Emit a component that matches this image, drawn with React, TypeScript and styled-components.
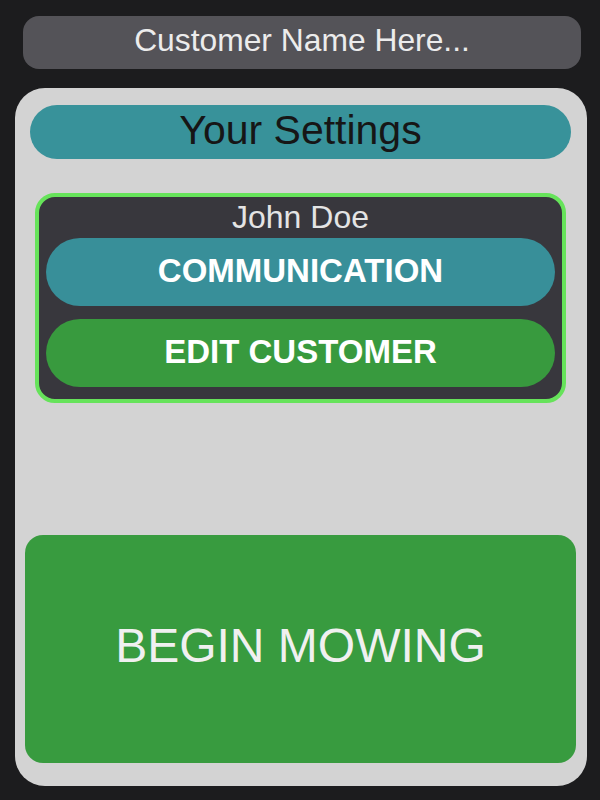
import styled, { createGlobalStyle } from "styled-components";

const GlobalStyle = createGlobalStyle`
  html, body {
    margin: 0;
    padding: 0;
    background-color: #1c1c1e;
    font-family: "Liberation Sans", Arial, sans-serif;
  }
  * {
    box-sizing: border-box;
  }
`;

const Page = styled.div`
  height: 800px;
  display: flex;
  flex-direction: column;
  padding: 16px 13px 14px 15px;
`;

const TopBar = styled.div`
  height: 53px;
  margin: 0 6px 19px 8px;
  border-radius: 16px;
  background-color: #545358;
  color: #ececec;
  font-size: 31.8px;
  display: flex;
  align-items: center;
  justify-content: center;
  padding-bottom: 4px;
`;

const Panel = styled.div`
  flex: 1;
  display: flex;
  flex-direction: column;
  background-color: #d3d3d3;
  border-radius: 30px;
  padding: 17px 11px 23px 10px;
`;

const SettingsBar = styled.div`
  height: 54px;
  margin: 0 5px;
  border-radius: 27px;
  background-color: #38929a;
  color: #161616;
  font-size: 41px;
  display: flex;
  align-items: center;
  justify-content: center;
  padding-bottom: 4px;
`;

const Card = styled.div`
  margin: 34px 10px 0 10px;
  border: 4px solid #66e35a;
  border-radius: 20px;
  background-color: #38373d;
  padding: 0 7px 12px 7px;
  display: flex;
  flex-direction: column;
  gap: 13px;
`;

const CustomerName = styled.div`
  height: 28px;
  line-height: 41px;
  color: #e4e4e4;
  font-size: 32px;
  text-align: center;
`;

const PillButton = styled.button<{ $color: string }>`
  height: 68px;
  border: none;
  border-radius: 34px;
  background-color: ${(props) => props.$color};
  color: #ffffff;
  font-family: "Liberation Sans", Arial, sans-serif;
  font-weight: 700;
  font-size: 33px;
  display: flex;
  align-items: center;
  justify-content: center;
  padding: 0 0 2px 0;
  cursor: pointer;
`;

const MowButton = styled.button`
  margin-top: auto;
  height: 228px;
  border: none;
  border-radius: 18px;
  background-color: #389b3f;
  color: #f0f0f0;
  font-family: "Liberation Sans", Arial, sans-serif;
  font-size: 48px;
  display: flex;
  align-items: center;
  justify-content: center;
  padding: 0 0 8px 0;
  cursor: pointer;
`;

function App() {
  return (
    <>
      <GlobalStyle />
      <Page>
        <TopBar>Customer Name Here...</TopBar>
        <Panel>
          <SettingsBar>Your Settings</SettingsBar>
          <Card>
            <CustomerName>John Doe</CustomerName>
            <PillButton $color="#388f99">COMMUNICATION</PillButton>
            <PillButton $color="#389a3e">EDIT CUSTOMER</PillButton>
          </Card>
          <MowButton>BEGIN MOWING</MowButton>
        </Panel>
      </Page>
    </>
  );
}

export default App;
